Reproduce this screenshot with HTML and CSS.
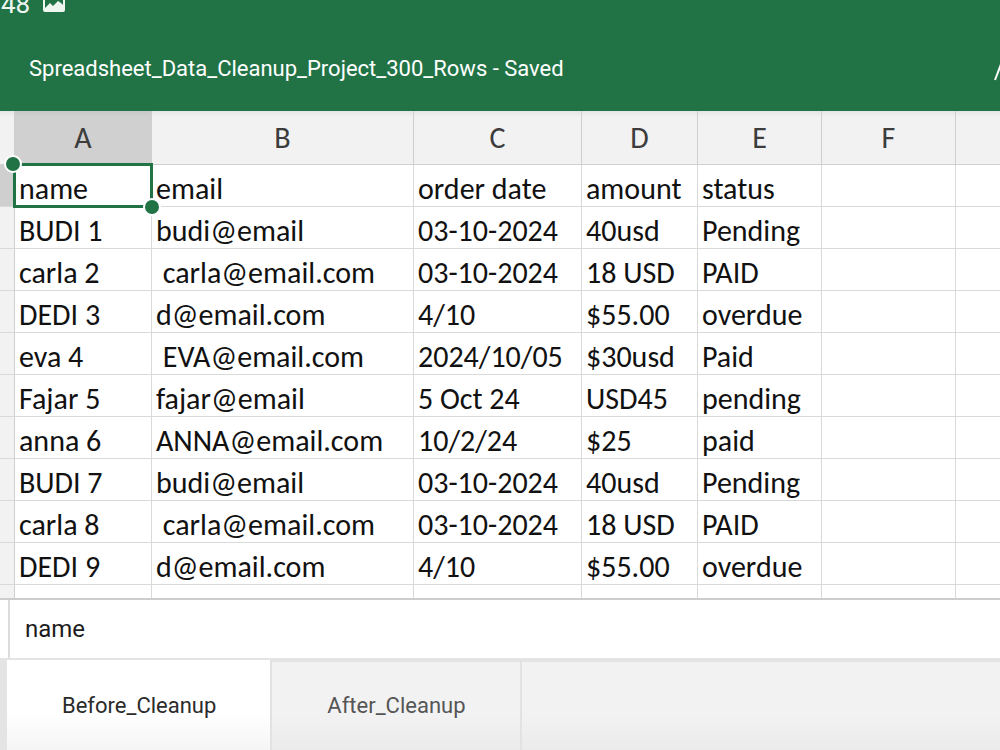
FILE: index.html
```html
<!DOCTYPE html>
<html lang="en">
<head>
<meta charset="utf-8">
<meta name="viewport" content="width=device-width, initial-scale=1">
<title>Spreadsheet_Data_Cleanup_Project_300_Rows</title>
<link rel="stylesheet" href="styles.css">
</head>
<body>
<div class="app">
  <header class="topbar">
    <div class="status">
      <span class="clock">48</span>
      <svg class="picture" viewBox="0 0 22 20" aria-hidden="true">
        <rect width="22" height="20" rx="2" fill="#eef6f0"/>
        <path d="M2 16V2H20V13L18 11L15 9L10 14L7 11Z" fill="#217346"/>
      </svg>
    </div>
    <div class="titlebar">
      <h1 class="title">Spreadsheet_Data_Cleanup_Project_300_Rows - Saved</h1>
      <button class="format" type="button" aria-label="Format">
        <svg viewBox="0 0 24 26" aria-hidden="true"><path d="M1 24L9 3L17 24M6 17H12" fill="none" stroke="#fff" stroke-width="2"/></svg>
      </button>
    </div>
  </header>

  <main class="sheet">
    <table class="grid">
      <colgroup>
        <col class="c-row"><col class="c-a"><col class="c-b"><col class="c-c"><col class="c-d"><col class="c-e"><col class="c-f"><col>
      </colgroup>
      <thead>
        <tr><td></td><th class="active" scope="col">A</th><th scope="col">B</th><th scope="col">C</th><th scope="col">D</th><th scope="col">E</th><th scope="col">F</th><th scope="col"></th></tr>
      </thead>
      <tbody>
        <tr><td class="active"></td><td class="selected">name<span class="handle start"></span><span class="handle end"></span></td><td>email</td><td>order date</td><td>amount</td><td>status</td><td></td><td></td></tr>
        <tr><td></td><td>BUDI 1</td><td>budi@email</td><td>03-10-2024</td><td>40usd</td><td>Pending</td><td></td><td></td></tr>
        <tr><td></td><td>carla 2</td><td> carla@email.com</td><td>03-10-2024</td><td>18 USD</td><td>PAID</td><td></td><td></td></tr>
        <tr><td></td><td>DEDI 3</td><td>d@email.com</td><td>4/10</td><td>$55.00</td><td>overdue</td><td></td><td></td></tr>
        <tr><td></td><td>eva 4</td><td> EVA@email.com</td><td>2024/10/05</td><td>$30usd</td><td>Paid</td><td></td><td></td></tr>
        <tr><td></td><td>Fajar 5</td><td>fajar@email</td><td>5 Oct 24</td><td>USD45</td><td>pending</td><td></td><td></td></tr>
        <tr><td></td><td>anna 6</td><td>ANNA@email.com</td><td>10/2/24</td><td>$25</td><td>paid</td><td></td><td></td></tr>
        <tr><td></td><td>BUDI 7</td><td>budi@email</td><td>03-10-2024</td><td>40usd</td><td>Pending</td><td></td><td></td></tr>
        <tr><td></td><td>carla 8</td><td> carla@email.com</td><td>03-10-2024</td><td>18 USD</td><td>PAID</td><td></td><td></td></tr>
        <tr><td></td><td>DEDI 9</td><td>d@email.com</td><td>4/10</td><td>$55.00</td><td>overdue</td><td></td><td></td></tr>
        <tr><td></td><td>eva 10</td><td> EVA@email.com</td><td>2024/10/05</td><td>$30usd</td><td>Paid</td><td></td><td></td></tr>
      </tbody>
    </table>
  </main>

  <div class="formula">
    <input class="formula-input" type="text" value="name" aria-label="Cell content">
  </div>

  <nav class="tabs" aria-label="Sheets">
    <button class="tab current" type="button" aria-current="page">Before_Cleanup</button>
    <button class="tab" type="button">After_Cleanup</button>
  </nav>
</div>
</body>
</html>
```
FILE: styles.css
```css
* { box-sizing: border-box; }

body {
  margin: 0;
  background: #fff;
  font-family: Roboto, "Liberation Sans", sans-serif;
}

.app {
  display: flex;
  flex-direction: column;
  height: 100vh;
  overflow: hidden;
}

.topbar {
  flex: none;
  background: #217346;
  color: #fff;
}

.status {
  display: flex;
  align-items: flex-end;
  gap: 13px;
  height: 12px;
  color: #eef6f0;
}
.clock { font-size: 26px; line-height: 16px; padding-left: 1px; }
.picture { flex: none; width: 22px; height: 20px; }

.titlebar {
  display: flex;
  align-items: center;
  justify-content: space-between;
  height: 99px;
  padding: 14px 0 0 29px;
  overflow: hidden;
}
.title {
  margin: 0;
  font-size: 22px;
  font-weight: 400;
  line-height: 28px;
  white-space: nowrap;
}
.format {
  flex: none;
  width: 24px;
  height: 26px;
  margin-right: -18px;
  padding: 0;
  border: 0;
  background: none;
}
.format svg { display: block; width: 24px; height: 26px; }

.sheet {
  flex: 1;
  min-height: 0;
  overflow: hidden;
}

.grid {
  width: 100%;
  table-layout: fixed;
  border-collapse: separate;
  border-spacing: 0;
  font-family: Carlito, Lato, sans-serif;
  font-size: 30px;
  line-height: 34px;
  color: #111;
}
.c-row { width: 15px; }
.c-a { width: 137px; }
.c-b { width: 262px; }
.c-c { width: 168px; }
.c-d { width: 116px; }
.c-e { width: 124px; }
.c-f { width: 134px; }

.grid th, .grid td {
  padding: 0;
  border-right: 1px solid #d8dada;
  border-bottom: 1px solid #d8dada;
  text-align: left;
  font-weight: 400;
  white-space: pre;
}
.grid tr > :last-child { border-right: 0; }
.grid thead th, .grid thead td {
  height: 54px;
  background: linear-gradient(#e4e6e5, #f2f2f2 6px);
  border-color: #cfcfcf;
  color: #3c3c3c;
  text-align: center;
}
.grid thead th.active {
  background: linear-gradient(#c6c8c7, #d0d0d0 6px);
}
.grid tbody td {
  height: 42px;
  padding: 7px 0 0 4px;
  vertical-align: top;
}
.grid tbody td:first-child {
  padding: 0;
  background: #f2f2f2;
  border-right-color: #cfcfcf;
}
.grid tbody td.active { background: #cfcfcf; }

.grid .selected { position: relative; }
.selected::before {
  content: "";
  position: absolute;
  inset: -2px -2px -2px -2px;
  border: 3px solid #217346;
}
.handle {
  position: absolute;
  width: 18px;
  height: 18px;
  border: 2px solid #fff;
  border-radius: 50%;
  background: #217346;
}
.start { left: -11px; top: -10px; }
.end { right: -10px; bottom: -10px; }

.formula {
  flex: none;
  display: flex;
  height: 60px;
  padding-left: 8px;
  border-top: 2px solid #cdcdcd;
}
.formula-input {
  flex: 1;
  min-width: 0;
  padding: 0 15px;
  border: 0;
  border-left: 2px solid #dcdcdc;
  outline: 0;
  background: #fff;
  color: #1c1c1c;
  font: 24px/30px Roboto, sans-serif;
}

.tabs {
  flex: none;
  display: flex;
  height: 92px;
  padding-left: 7px;
  border-top: 2px solid #e4e4e4;
  background: linear-gradient(90deg, #e4e4e4 7px, transparent 7px), linear-gradient(#e4e4e4 2px, #f2f2f2 2px 60%, #ebebeb);
}
.tab {
  padding: 2px 54px 0 55px;
  border: 0;
  border-right: 2px solid #e2e2e2;
  background: none;
  color: #555;
  font: 22px/28px Roboto, sans-serif;
}
.tab.current {
  background: linear-gradient(#fff 60%, #f5f5f5);
  color: #2b2b2b;
}
```
